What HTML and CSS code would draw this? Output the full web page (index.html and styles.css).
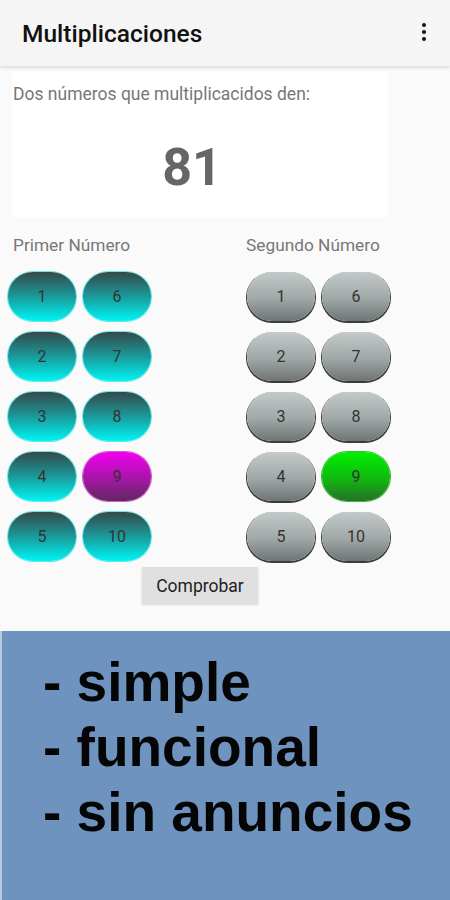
FILE: index.html
```html
<!DOCTYPE html>
<html lang="es">
<head>
  <meta charset="UTF-8" />
  <meta name="viewport" content="width=device-width, initial-scale=1.0"/>
  <title>Multiplicaciones</title>
  <link rel="stylesheet" href="styles.css">
</head>
<body>

<div class="appbar">
  <h1>Multiplicaciones</h1>
  <div class="menu"><span></span><span></span><span></span></div>
</div>

<div class="card">
  <p class="prompt">Dos números que multiplicacidos den:</p>
  <div class="target">81</div>
</div>

<div class="pickers">
  <div class="picker">
    <div class="label">Primer Número</div>
    <div class="keys">
      <button class="key cyan">1</button>
      <button class="key cyan">2</button>
      <button class="key cyan">3</button>
      <button class="key cyan">4</button>
      <button class="key cyan">5</button>
      <button class="key cyan">6</button>
      <button class="key cyan">7</button>
      <button class="key cyan">8</button>
      <button class="key magenta">9</button>
      <button class="key cyan">10</button>
    </div>
  </div>
  <div class="picker right">
    <div class="label">Segundo Número</div>
    <div class="keys">
      <button class="key gray">1</button>
      <button class="key gray">2</button>
      <button class="key gray">3</button>
      <button class="key gray">4</button>
      <button class="key gray">5</button>
      <button class="key gray">6</button>
      <button class="key gray">7</button>
      <button class="key gray">8</button>
      <button class="key green">9</button>
      <button class="key gray">10</button>
    </div>
  </div>
</div>

<button class="check">Comprobar</button>

<div class="promo">
  <p>- simple</p>
  <p>- funcional</p>
  <p>- sin anuncios</p>
</div>

</body>
</html>
```

FILE: styles.css
```css
body {
  font-family: Roboto, "Noto Sans", sans-serif;
  background: #fafafa;
  margin: 0;
  padding: 0;
  width: 450px;
  height: 900px;
  overflow: hidden;
  display: flex;
  flex-direction: column;
}
.appbar {
  height: 66px;
  background: #f5f5f5;
  box-shadow: 0 2px 3px rgba(0,0,0,0.12);
  display: flex;
  align-items: center;
  justify-content: space-between;
  padding: 0 24px 0 22px;
  flex-shrink: 0;
}
.appbar h1 {
  margin: 0;
  font-size: 24.5px;
  font-weight: 500;
  color: #111;
}
.menu {
  display: flex;
  flex-direction: column;
  gap: 3px;
  margin-top: -2px;
}
.menu span {
  width: 4px;
  height: 4px;
  border-radius: 50%;
  background: #111;
}
.card {
  background: white;
  margin: 6px 62px 0 12px;
  height: 145px;
  padding: 12px 0 0 1px;
  box-sizing: border-box;
}
.prompt {
  margin: 0;
  font-size: 17.5px;
  color: #777;
}
.target {
  text-align: center;
  font-size: 52px;
  font-weight: 700;
  color: #666;
  margin-top: 38px;
  padding-right: 17px;
  line-height: 1;
}
.pickers {
  display: flex;
  padding-left: 8px;
  margin-top: 18px;
}
.picker {
  width: 238px;
  flex-shrink: 0;
}
.picker.right {
  width: auto;
  flex: 1;
}
.label {
  font-size: 17.3px;
  color: #777;
  padding-left: 5px;
  height: 37px;
}
.right .label {
  padding-left: 0;
}
.right .keys {
  padding-left: 1px;
}
.keys {
  display: grid;
  grid-auto-flow: column;
  grid-template-rows: repeat(5, 49px);
  grid-template-columns: 68px 68px;
  row-gap: 11px;
  column-gap: 7px;
}
.key {
  border: none;
  border-radius: 25px / 24px;
  font-family: Roboto, sans-serif;
  font-size: 16px;
  color: #333;
  padding: 0;
}
.cyan {
  background: linear-gradient(#36494a, #1a9a9a 50%, #00f4f4);
  box-shadow: 0 0 0 1px #62eaea;
}
.magenta {
  background: linear-gradient(#f000f0, #a616a6 55%, #602860);
  box-shadow: 0 0 0 1px #d45ad4;
}
.gray {
  background: linear-gradient(#c4caca, #a0a7a7 55%, #6e7474);
  box-shadow: 0 1px 0 1px #3a3c3c;
}
.green {
  background: linear-gradient(#00f000, #10b810 55%, #287028);
  box-shadow: 0 0 0 1px #30c030;
}
.check {
  margin: 6px 0 0 142px;
  width: 116px;
  height: 37px;
  background: #e0e0e0;
  border: none;
  font-family: Roboto, sans-serif;
  font-size: 17.5px;
  color: #222;
  box-shadow: 0 1px 2px rgba(0,0,0,0.15);
}
.promo {
  margin-top: 27px;
  flex: 1;
  background: #6f93bf;
  border-left: 2px solid #b8c9de;
  padding: 19px 0 0 41px;
}
.promo p {
  margin: 0;
  font-family: "Liberation Sans", Arial, sans-serif;
  font-weight: 700;
  font-size: 55px;
  line-height: 65px;
  color: #050505;
}
```
